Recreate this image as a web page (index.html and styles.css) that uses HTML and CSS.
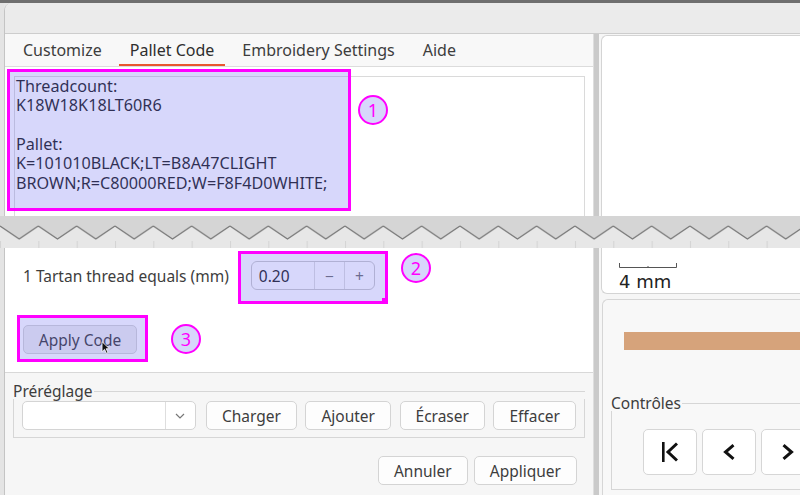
FILE: index.html
```html
<!DOCTYPE html>
<html lang="fr">
<head>
    <meta charset="UTF-8">
    <meta name="viewport" content="width=device-width, initial-scale=1.0">
    <title>Tartan - Pallet Code</title>
    <link rel="stylesheet" href="styles.css">
</head>
<body>

    <div class="wm-bar"></div>

    <!-- upper part of the dialog -->
    <div class="strip strip-top">
        <div class="desk"></div>
        <div class="dialog dialog-top">
            <div class="titlebar"></div>
            <div class="panes">
                <div class="left-pane">
                    <nav class="tabs">
                        <span class="tab">Customize</span>
                        <span class="tab active">Pallet Code</span>
                        <span class="tab">Embroidery Settings</span>
                        <span class="tab">Aide</span>
                    </nav>
                    <div class="page page-top">
                        <div class="textview">
                            <div>Threadcount:</div>
                            <div>K18W18K18LT60R6</div>
                            <div class="blank-line"></div>
                            <div>Pallet:</div>
                            <div>K=101010BLACK;LT=B8A47CLIGHT</div>
                            <div>BROWN;R=C80000RED;W=F8F4D0WHITE;</div>
                        </div>
                        <div class="mark mark-1"></div>
                        <div class="badge badge-1">1</div>
                    </div>
                </div>
                <div class="handle"></div>
                <div class="right-pane">
                    <div class="preview preview-top"></div>
                </div>
            </div>
        </div>
    </div>

    <!-- torn edge between the two crops -->
    <div class="tear">
        <svg width="800" height="32" viewBox="0 0 800 32">
            <defs>
                <pattern id="zigzag" width="38.33" height="32" patternUnits="userSpaceOnUse">
                    <rect width="38.33" height="32" fill="#e7e7e7"/>
                    <path d="M0 0H38.33V10L19.17 23L0 10Z" fill="#d5d5d5"/>
                    <path d="M0 10L19.17 23L38.33 10" fill="none" stroke="#7a7a7a" stroke-width="1.4"/>
                    <path d="M0.5 25V32" stroke="#d4d4d4"/>
                </pattern>
            </defs>
            <rect width="800" height="32" fill="url(#zigzag)"/>
        </svg>
    </div>

    <!-- lower part of the dialog -->
    <div class="strip strip-bottom">
        <div class="desk"></div>
        <div class="dialog">
            <div class="panes">
                <div class="left-pane">
                    <div class="page page-bottom">
                        <div class="scale-row">
                            <span class="field-label">1 Tartan thread equals (mm)</span>
                            <div class="spin">
                                <span class="spin-value">0.20</span>
                                <span class="spin-btn">&minus;</span>
                                <span class="spin-btn">+</span>
                            </div>
                        </div>
                        <button class="btn btn-apply">Apply Code</button>

                        <div class="mark mark-2"></div>
                        <div class="badge badge-2">2</div>
                        <div class="mark mark-3"></div>
                        <div class="badge badge-3">3</div>
                        <svg class="cursor" width="9" height="13" viewBox="0 0 11 17">
                            <path d="M1 1V14L4.3 10.8L6.6 16L8.6 15.1L6.4 10H10.5Z" fill="#111" stroke="#fff" stroke-width="1"/>
                        </svg>
                    </div>

                    <div class="actions">
                        <div class="frame preset-frame">
                            <div class="frame-head"><span>Préréglage</span></div>
                            <div class="frame-box">
                                <div class="combo">
                                    <span class="combo-entry"></span>
                                    <span class="combo-arrow">
                                        <svg width="10" height="6" viewBox="0 0 10 6"><path d="M1 1L5 5L9 1" fill="none" stroke="#777" stroke-width="1.2"/></svg>
                                    </span>
                                </div>
                                <button class="btn">Charger</button>
                                <button class="btn">Ajouter</button>
                                <button class="btn">Écraser</button>
                                <button class="btn">Effacer</button>
                            </div>
                        </div>
                        <div class="dialog-buttons">
                            <button class="btn">Annuler</button>
                            <button class="btn">Appliquer</button>
                        </div>
                    </div>
                </div>
                <div class="handle"></div>
                <div class="right-pane">
                    <div class="preview preview-bottom">
                        <svg class="ruler" width="60" height="6" viewBox="0 0 60 6">
                            <path d="M0.5 1V5.5H57.5V1M29 4V5.5" fill="none" stroke="#555" stroke-width="1"/>
                        </svg>
                        <div class="ruler-label">4 mm</div>
                    </div>
                    <div class="pattern-panel">
                        <div class="thread-bar"></div>
                        <div class="frame controls-frame">
                            <div class="frame-head"><span>Contrôles</span></div>
                            <div class="frame-box">
                                <button class="nav-btn">
                                    <svg width="16" height="20" viewBox="0 0 16 20"><rect x="0" y="0" width="2.6" height="20" fill="#111"/><path d="M15 1.5L6 10L15 18.5" fill="none" stroke="#111" stroke-width="3"/></svg>
                                </button>
                                <button class="nav-btn">
                                    <svg width="12" height="16" viewBox="0 0 12 16"><path d="M10.5 1.2L2.5 8L10.5 14.8" fill="none" stroke="#111" stroke-width="3"/></svg>
                                </button>
                                <button class="nav-btn">
                                    <svg width="12" height="16" viewBox="0 0 12 16"><path d="M1.5 1.2L9.5 8L1.5 14.8" fill="none" stroke="#111" stroke-width="3"/></svg>
                                </button>
                            </div>
                        </div>
                    </div>
                </div>
            </div>
        </div>
    </div>

</body>
</html>
```

FILE: styles.css
```css
/* General */
body {
    margin: 0;
    width: 800px;
    height: 495px;
    overflow: hidden;
    background-color: #e6e6e6;
    font-family: "Noto Sans", "Open Sans", sans-serif;
    font-size: 15.5px;
    color: #3d3d3d;
}

svg {
    display: block;
}

.wm-bar {
    height: 3px;
    background-color: #6f6f6f;
}

.strip {
    display: flex;
}

.strip-top {
    height: 213px;
}

.strip-bottom {
    height: 247px;
}

.tear {
    height: 32px;
    overflow: hidden;
}

.desk {
    width: 4px;
    flex: none;
    background-color: #e4e4e4;
}

.dialog {
    flex: 1;
    min-width: 0;
    display: flex;
    flex-direction: column;
    background-color: #f6f6f6;
    border-left: 1px solid #c4c4c4;
    overflow: hidden;
}

.dialog-top {
    border-top-left-radius: 8px;
}

.titlebar {
    flex: none;
    height: 30px;
    background-color: #ebebeb;
    border-bottom: 1px solid #cdcdcd;
}

.panes {
    flex: 1;
    min-height: 0;
    display: flex;
}

.left-pane {
    width: 588px;
    flex: none;
    display: flex;
    flex-direction: column;
}

.handle {
    width: 5px;
    flex: none;
    background-color: #cacaca;
    border-left: 1px solid #dedede;
}

.right-pane {
    flex: 1;
    min-width: 0;
    padding-left: 2px;
    display: flex;
    flex-direction: column;
}

/* Tabs */
.tabs {
    flex: none;
    height: 32px;
    display: flex;
    gap: 6px;
    padding-left: 7px;
    background-color: #f8f8f8;
    border-bottom: 1px solid #dcdcdc;
    font-size: 16px;
}

.tab {
    display: flex;
    align-items: center;
    padding: 0 11px;
}

.tab.active {
    color: #2e2e2e;
    box-shadow: inset 0 -2px 0 #e8562f;
}

/* Pages */
.page {
    position: relative;
    background-color: #fff;
}

.page-top {
    flex: 1;
    padding: 9px 8px 0 9px;
}

.textview {
    height: 100%;
    box-sizing: border-box;
    border: 1px solid #dadada;
    border-bottom: none;
    padding-left: 1px;
    font-size: 16.2px;
    line-height: 19.33px;
    color: #1f1f1f;
}

.blank-line {
    height: 19.33px;
}

.page-bottom {
    flex: none;
    height: 125px;
    box-sizing: border-box;
    padding: 13px 0 0 18px;
    border-bottom: 1px solid #d8d8d8;
}

.scale-row {
    display: flex;
    align-items: center;
    gap: 22px;
    height: 29px;
}

.spin {
    display: flex;
    width: 124px;
    height: 29px;
    box-sizing: border-box;
    border: 1px solid #cbcbcb;
    border-radius: 6px;
    background-color: #fff;
}

.spin-value {
    width: 62px;
    box-sizing: border-box;
    padding-left: 7px;
    display: flex;
    align-items: center;
    color: #222;
}

.spin-btn {
    flex: 1;
    display: flex;
    align-items: center;
    justify-content: center;
    border-left: 1px solid #dedede;
    color: #707070;
}

/* Buttons */
.btn {
    height: 29px;
    box-sizing: border-box;
    padding: 0 15px;
    border: 1px solid #d4d4d4;
    border-radius: 5px;
    background-color: #fdfdfd;
    font-family: inherit;
    font-size: 15.5px;
    color: #3d3d3d;
}

.btn-apply {
    display: block;
    width: 114px;
    margin-top: 35px;
    padding: 0;
    background-color: #efefef;
}

/* Annotation overlays */
.mark {
    position: absolute;
    box-sizing: border-box;
    border: 3px solid #ff00ff;
    background-color: rgba(96, 96, 240, 0.25);
}

.mark-1 {
    left: 2px;
    top: 2px;
    width: 344px;
    height: 142px;
}

.mark-2 {
    left: 233px;
    top: 3px;
    width: 150px;
    height: 53px;
}

.mark-2::after {
    content: "";
    position: absolute;
    right: 0;
    bottom: 0;
    width: 3px;
    height: 3px;
    background-color: #ff00ff;
}

.mark-3 {
    left: 12px;
    top: 67px;
    width: 131px;
    height: 47px;
}

.badge {
    position: absolute;
    width: 30px;
    height: 30px;
    box-sizing: border-box;
    border: 2.5px solid #ff00ff;
    border-radius: 50%;
    background-color: rgba(96, 96, 240, 0.25);
    display: flex;
    align-items: center;
    justify-content: center;
    font-size: 18px;
    color: #ff00ff;
}

.badge-1 {
    left: 353px;
    top: 28px;
}

.badge-2 {
    left: 396px;
    top: 5px;
}

.badge-3 {
    left: 166px;
    top: 76px;
}

.cursor {
    position: absolute;
    left: 96px;
    top: 93px;
}

/* Lower action area */
.actions {
    flex: 1;
    padding: 10px 8px 0 8px;
}

.frame-head {
    display: flex;
    align-items: center;
    height: 16px;
    line-height: 16px;
}

.frame-head::after {
    content: "";
    flex: 1;
    margin-left: 1px;
    border-top: 1px solid #d6d6d6;
}

.frame-box {
    display: flex;
    border: 1px solid #d6d6d6;
    border-top: none;
}

.preset-frame .frame-box {
    gap: 8.5px;
    padding: 2px 8px 7px 8px;
}

.combo {
    flex: 1;
    display: flex;
    height: 29px;
    box-sizing: border-box;
    margin-right: 1.5px;
    border: 1px solid #d4d4d4;
    border-radius: 5px;
    background-color: #fff;
}

.combo-entry {
    flex: 1;
}

.combo-arrow {
    width: 29px;
    display: flex;
    align-items: center;
    justify-content: center;
    border-left: 1px solid #dedede;
}

.dialog-buttons {
    display: flex;
    justify-content: flex-end;
    gap: 6px;
    margin-top: 18px;
    padding-right: 8px;
}

/* Right preview */
.preview {
    background-color: #fff;
    border-left: 1px solid #d4d4d4;
}

.preview-top {
    flex: 1;
    margin-top: 1px;
    border-top: 1px solid #d4d4d4;
    border-top-left-radius: 6px;
}

.preview-bottom {
    flex: none;
    height: 46px;
    box-sizing: border-box;
    padding: 14px 0 0 17px;
    border-bottom: 1px solid #d4d4d4;
    border-bottom-left-radius: 6px;
}

.ruler-label {
    margin-top: 5px;
    font-family: "DejaVu Sans", sans-serif;
    font-size: 18px;
    line-height: 18px;
    color: #222;
}

.pattern-panel {
    flex: 1;
    margin: 5px 0 0 1px;
    overflow: hidden;
    background-color: #f8f8f8;
    border-top: 1px solid #d6d6d6;
    border-left: 1px solid #d6d6d6;
    border-top-left-radius: 6px;
}

.thread-bar {
    height: 18px;
    margin: 32px 0 0 21px;
    background-color: #d6a37b;
}

.controls-frame {
    margin: 45px 0 0 8px;
    width: 260px;
}

.controls-frame .frame-box {
    gap: 5px;
    padding: 18px 0 14px 31px;
}

.nav-btn {
    flex: none;
    width: 54px;
    height: 46px;
    box-sizing: border-box;
    display: flex;
    align-items: center;
    justify-content: center;
    padding: 0;
    border: 1px solid #d6d6d6;
    border-radius: 5px;
    background-color: #fff;
}
```
